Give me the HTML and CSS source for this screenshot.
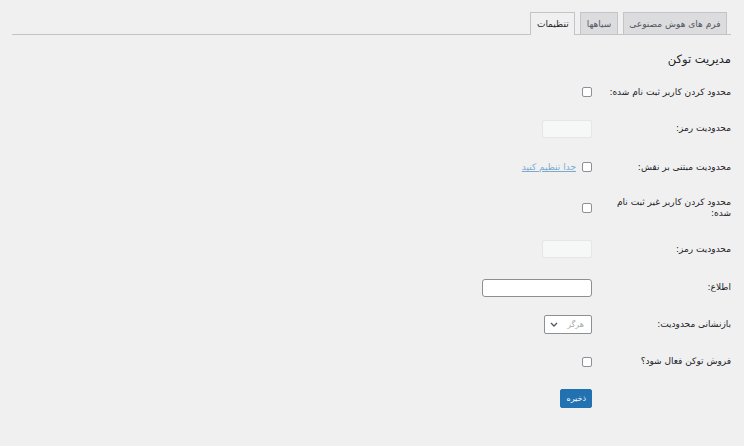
FILE: index.html
```html
<!DOCTYPE html>
<html lang="fa" dir="rtl">
<head>
<meta charset="utf-8">
<title>تنظیمات</title>
<link rel="stylesheet" href="styles.css">
</head>
<body>
<div class="wrap">
  <nav class="tabs">
    <a class="tab">فرم های هوش مصنوعی</a>
    <a class="tab">سیاهها</a>
    <a class="tab active">تنظیمات</a>
  </nav>
  <h2 class="title">مدیریت توکن</h2>
  <form class="form">
    <div class="row short">
      <label class="label">محدود کردن کاربر ثبت نام شده:</label>
      <div class="field"><input type="checkbox" class="cb"></div>
    </div>
    <div class="row">
      <label class="label">محدودیت رمز:</label>
      <div class="field"><input type="text" class="txt small" disabled></div>
    </div>
    <div class="row mid">
      <label class="label">محدودیت مبتنی بر نقش:</label>
      <div class="field"><input type="checkbox" class="cb"><a class="link">جدا تنظیم کنید</a></div>
    </div>
    <div class="row tall">
      <label class="label">محدود کردن کاربر غیر ثبت نام شده:</label>
      <div class="field"><input type="checkbox" class="cb"></div>
    </div>
    <div class="row mid">
      <label class="label">محدودیت رمز:</label>
      <div class="field"><input type="text" class="txt small" disabled></div>
    </div>
    <div class="row">
      <label class="label">اطلاع:</label>
      <div class="field"><input type="text" class="txt wide"></div>
    </div>
    <div class="row">
      <label class="label">بازنشانی محدودیت:</label>
      <div class="field">
        <div class="select"><span class="sel-text">هرگز</span>
          <svg class="chev" width="8" height="5" viewBox="0 0 8 5"><path d="M1 1l3 3 3-3" fill="none" stroke="#50575e" stroke-width="1.3"/></svg>
        </div>
      </div>
    </div>
    <div class="row">
      <label class="label">فروش توکن فعال شود؟</label>
      <div class="field"><input type="checkbox" class="cb"></div>
    </div>
    <div class="row short">
      <div class="label"></div>
      <div class="field"><button type="button" class="btn">ذخیره</button></div>
    </div>
  </form>
</div>
</body>
</html>
```
FILE: styles.css
```css
html, body {
  margin: 0;
  padding: 0;
  background: #f0f0f1;
}
body {
  font-family: "DejaVu Sans", "Noto Sans", sans-serif;
  color: #1d2327;
  font-size: 9px;
  direction: rtl;
}
.wrap {
  padding: 12px 13px 0 12px;
}
.tabs {
  display: flex;
  gap: 5px;
  padding-right: 4px;
  border-bottom: 1px solid #c3c4c7;
  height: 22px;
  align-items: flex-end;
}
.tab {
  display: flex;
  align-items: center;
  justify-content: center;
  box-sizing: border-box;
  height: 22px;
  padding: 0 5.5px;
  background: #dcdcde;
  border: 1px solid #c3c4c7;
  border-bottom: none;
  color: #50575e;
  font-size: 9px;
}
.tab.active {
  background: #f0f0f1;
  color: #1d2327;
  height: 23px;
  margin-bottom: -1px;
}
.title {
  margin: 17px 0 0;
  font-size: 11.5px;
  font-weight: normal;
  line-height: 14px;
  color: #1d2327;
}
.form {
  margin-top: 8px;
}
.row {
  display: grid;
  grid-template-columns: 130px 1fr;
  align-items: center;
  min-height: 37px;
}
.row.short { min-height: 36px; }
.row.mid { min-height: 40px; }
.row.tall { min-height: 42px; }
.label {
  font-size: 9px;
  line-height: 11px;
  padding-left: 3px;
}
.field {
  display: flex;
  align-items: center;
  gap: 6px;
  padding-right: 9px;
}
.cb {
  appearance: none;
  -webkit-appearance: none;
  margin: 0;
  width: 10px;
  height: 10px;
  border: 1px solid #8c8f94;
  border-radius: 2px;
  background: #fff;
  box-sizing: border-box;
}
.link {
  color: #2271b1;
  opacity: 0.55;
  text-decoration: underline;
  font-size: 9px;
}
.txt {
  margin: 0;
  box-sizing: border-box;
  height: 18px;
  border-radius: 2px;
  font: inherit;
}
.txt.small {
  width: 50px;
  background: #f6f7f7;
  border: 1px solid #e6e6e8;
}
.txt.wide {
  width: 110px;
  background: #fff;
  border: 1px solid #8c8f94;
  border-radius: 3px;
}
.select {
  box-sizing: border-box;
  width: 48px;
  height: 19px;
  border: 1px solid #8c8f94;
  border-radius: 2px;
  background: #fff;
  display: flex;
  align-items: center;
  justify-content: space-between;
  padding: 0 7px 0 5px;
}
.sel-text {
  color: #a7aaad;
  font-size: 8px;
}
.chev { display: block; }
.btn {
  box-sizing: border-box;
  height: 19px;
  padding: 0 5px;
  background: #2271b1;
  border: 1px solid #2271b1;
  border-radius: 2px;
  color: #fff;
  font: inherit;
  font-size: 8px;
}
```
